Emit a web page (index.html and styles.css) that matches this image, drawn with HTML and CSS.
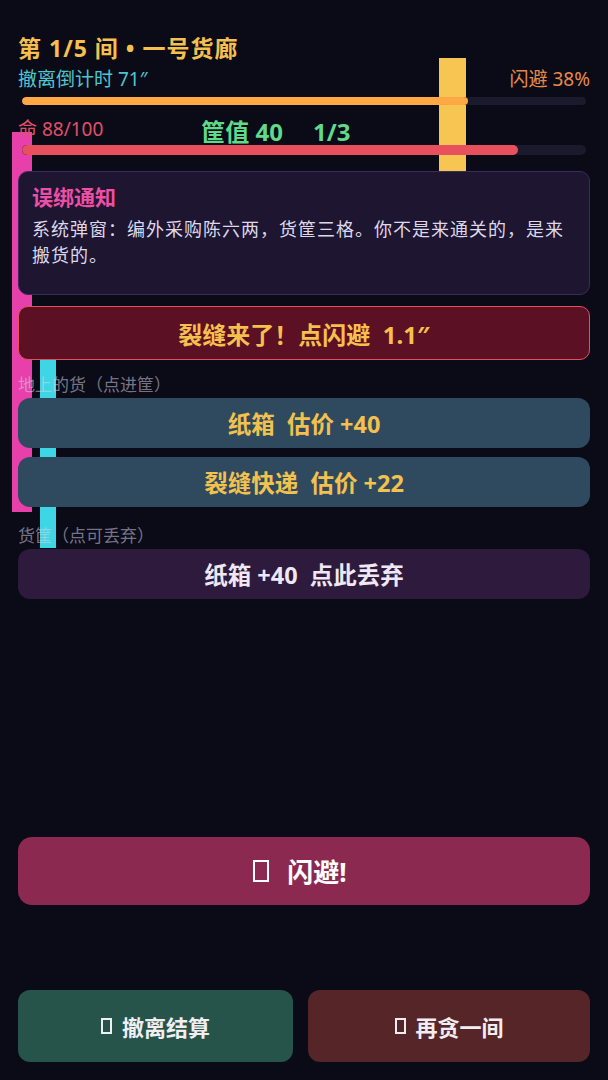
FILE: index.html
```html
<!DOCTYPE html>
<html>
<head>
    <title>一号货廊</title>
    <meta name="viewport" content="width=device-width, initial-scale=1.0">
    <link rel="stylesheet" href="styles.css">
</head>
<body>
    <div class="glitch glitch-yellow"></div>
    <div class="glitch glitch-pink"></div>
    <div class="glitch glitch-cyan"></div>

    <div class="app">
        <h1 class="room-title">第 1/5 间 • 一号货廊</h1>

        <div class="stat-row">
            <span class="timer">撤离倒计时 71″</span>
            <span class="dodge-rate">闪避 38%</span>
        </div>
        <div class="bar bar-thin">
            <div class="bar-fill fill-orange" style="width: 79%"></div>
        </div>

        <div class="stat-row hp-row">
            <span class="hp">命 88/100</span>
            <span class="haul">筐值 40</span>
            <span class="haul haul-count">1/3</span>
        </div>
        <div class="bar">
            <div class="bar-fill fill-red" style="width: 88%"></div>
        </div>

        <div class="notice">
            <div class="notice-title">误绑通知</div>
            <div class="notice-body">系统弹窗：编外采购陈六两，货筐三格。你不是来通关的，是来搬货的。</div>
        </div>

        <button class="btn btn-alert">裂缝来了！点闪避&nbsp;&nbsp;1.1″</button>

        <div class="section-label">地上的货（点进筐）</div>
        <div class="item-list">
            <button class="btn btn-loot">纸箱&nbsp;&nbsp;估价 +40</button>
            <button class="btn btn-loot">裂缝快递&nbsp;&nbsp;估价 +22</button>
        </div>

        <div class="section-label basket-label">货筐（点可丢弃）</div>
        <div class="item-list">
            <button class="btn btn-basket">纸箱 +40&nbsp;&nbsp;点此丢弃</button>
        </div>

        <button class="btn btn-dodge"><span class="tofu tofu-big"></span>闪避!</button>

        <div class="actions">
            <button class="btn btn-evac"><span class="tofu"></span>撤离结算</button>
            <button class="btn btn-greed"><span class="tofu"></span>再贪一间</button>
        </div>
    </div>
</body>
</html>
```

FILE: styles.css
```css
body {
    margin: 0;
    background-color: #0a0b16;
    font-family: "Noto Sans", "Noto Sans CJK SC", sans-serif;
    color: #e6e2ee;
}
.app {
    position: relative;
    z-index: 1;
    padding: 34px 18px 18px;
}
.glitch {
    position: absolute;
    z-index: 0;
}
.glitch-yellow {
    left: 439px;
    top: 58px;
    width: 27px;
    height: 114px;
    background-color: #f7c552;
}
.glitch-pink {
    left: 12px;
    top: 132px;
    width: 20px;
    height: 380px;
    background-color: #e840aa;
}
.glitch-cyan {
    left: 40px;
    top: 340px;
    width: 16px;
    height: 208px;
    background-color: #3ed6e4;
}
.room-title {
    margin: 0;
    font-size: 23px;
    line-height: 28px;
    letter-spacing: 1px;
    color: #f5c04e;
}
.stat-row {
    display: flex;
    justify-content: space-between;
    align-items: center;
    margin-top: 5px;
    font-size: 19px;
    line-height: 24px;
}
.timer {
    color: #4fc3d0;
}
.dodge-rate {
    color: #e8894a;
}
.bar {
    margin: 3px 4px 0;
    height: 10px;
    border-radius: 5px;
    background-color: #1b1a2c;
    overflow: hidden;
}
.bar-thin {
    margin-top: 6px;
    height: 8px;
}
.bar-fill {
    height: 100%;
    border-radius: 5px;
}
.fill-orange {
    background-color: #ffa844;
}
.fill-red {
    background-color: #e8505e;
}
.hp-row {
    justify-content: flex-start;
    margin-top: 11px;
    height: 26px;
    line-height: 26px;
}
.hp {
    color: #e0506a;
}
.haul {
    margin-left: 98px;
    font-size: 24px;
    font-weight: bold;
    color: #5fd98a;
    position: relative;
    top: 3px;
}
.haul-count {
    margin-left: 30px;
}
.notice {
    margin-top: 16px;
    padding: 11px 14px 26px 13px;
    background-color: #1e1530;
    border: 1px solid #3d2a5a;
    border-radius: 10px;
}
.notice-title {
    font-size: 21px;
    line-height: 28px;
    font-weight: bold;
    color: #ec4fa6;
}
.notice-body {
    margin-top: 5px;
    font-size: 18px;
    line-height: 26px;
    letter-spacing: 1px;
    color: #ddd8ea;
}
.btn {
    display: flex;
    align-items: center;
    justify-content: center;
    width: 100%;
    border: none;
    border-radius: 12px;
    font-family: inherit;
    font-weight: bold;
    font-size: 23.5px;
    cursor: pointer;
}
.btn-alert {
    margin-top: 11px;
    height: 54px;
    background-color: #5c1024;
    border: 1px solid #e6505e;
    border-radius: 10px;
    color: #f5c04e;
    font-size: 24px;
}
.section-label {
    margin-top: 14px;
    font-size: 17px;
    line-height: 22px;
    color: rgba(215, 210, 230, 0.55);
}
.basket-label {
    margin-top: 18px;
}
.item-list {
    display: flex;
    flex-direction: column;
    gap: 9px;
    margin-top: 2px;
}
.btn-loot {
    height: 50px;
    background-color: #2f4a5f;
    color: #f2c14e;
}
.btn-basket {
    height: 50px;
    background-color: #2d1a3d;
    color: #efe8f4;
}
.btn-dodge {
    margin-top: 238px;
    padding-right: 14px;
    height: 68px;
    border-radius: 14px;
    background-color: #8c2950;
    color: #ffffff;
    font-size: 26px;
}
.tofu {
    display: inline-block;
    width: 7px;
    height: 12px;
    border: 2px solid currentColor;
    margin-right: 10px;
}
.tofu-big {
    width: 12px;
    height: 18px;
    margin-right: 18px;
}
.actions {
    display: flex;
    gap: 15px;
    margin-top: 85px;
}
.btn-evac,
.btn-greed {
    height: 72px;
    font-size: 22px;
    color: #f0eef2;
}
.btn-evac {
    flex: 275 1 0;
    background-color: #26544a;
}
.btn-greed {
    flex: 282 1 0;
    background-color: #562528;
}
```
